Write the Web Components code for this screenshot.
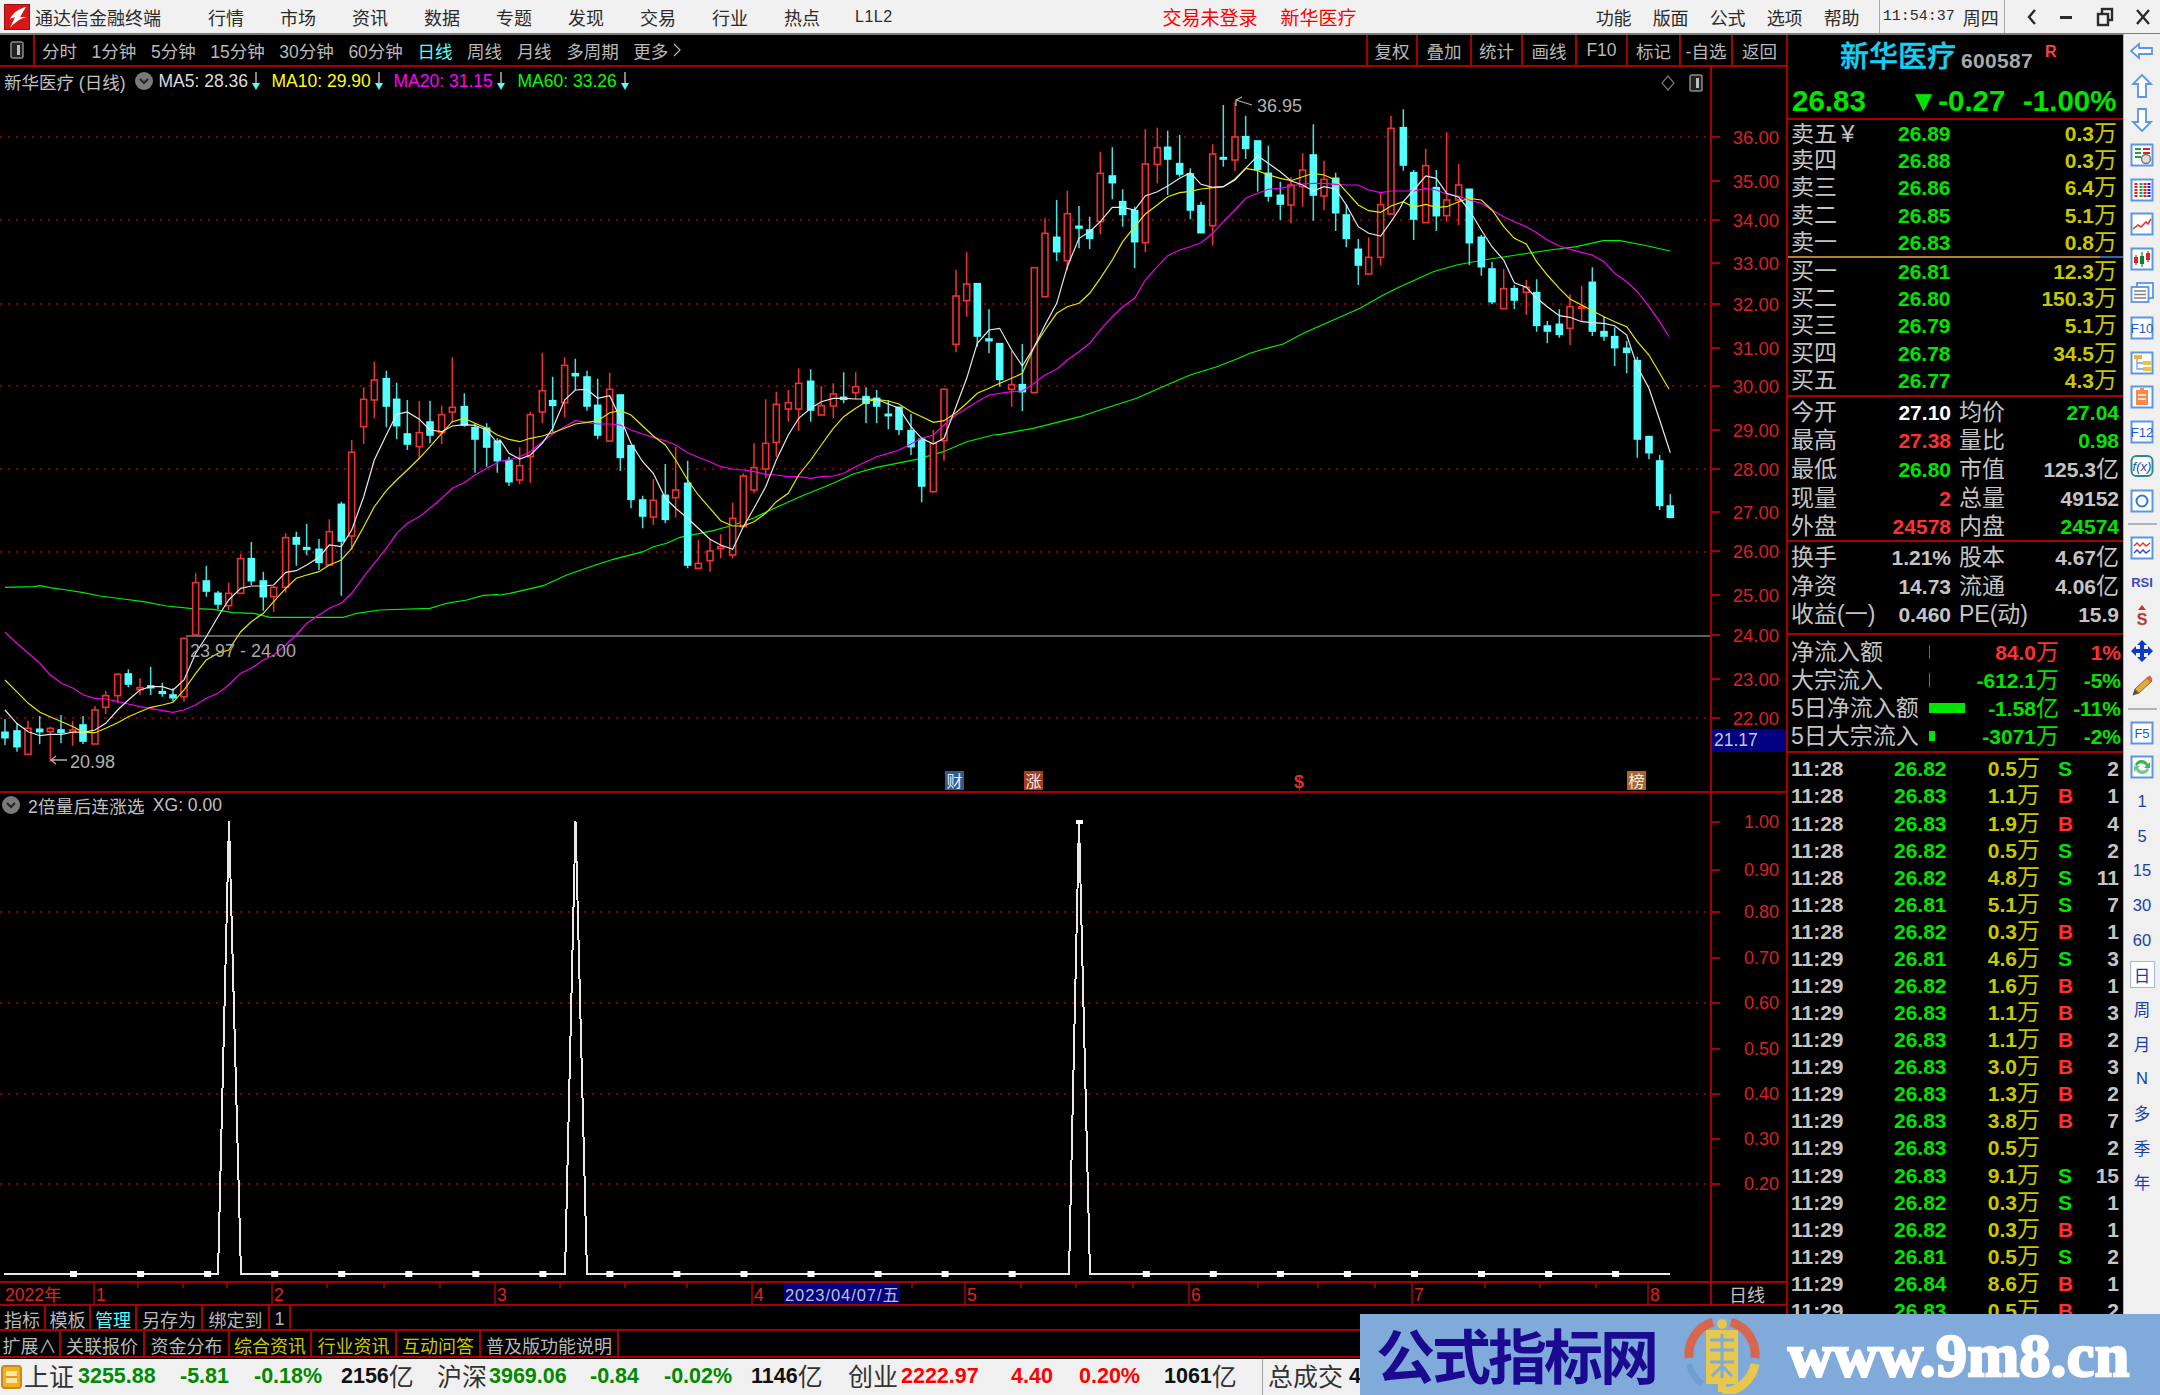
<!DOCTYPE html>
<html>
<head>
<meta charset="utf-8">
<style>
  html, body { margin: 0; padding: 0; background: #000; overflow: hidden; }
  body { font-family: "Liberation Sans", "Noto Sans CJK SC", sans-serif; }
</style>
</head>
<body>
<td-app>
  <td-titlebar></td-titlebar>
  <td-main>
    <td-left>
      <td-toolbar></td-toolbar>
      <td-kline></td-kline>
      <td-indicator></td-indicator>
      <td-dateaxis></td-dateaxis>
      <td-tabs h="25">
        <td-tab w="46">指标</td-tab><td-tab w="45">模板</td-tab><td-tab w="46" c="#54ffff">管理</td-tab><td-tab w="66">另存为</td-tab><td-tab w="67">绑定到</td-tab><td-tab w="21">1</td-tab>
      </td-tabs>
      <td-tabs h="27">
        <td-tab w="61">扩展∧</td-tab><td-tab w="84">关联报价</td-tab><td-tab w="85">资金分布</td-tab><td-tab w="82" c="#c8c800">综合资讯</td-tab><td-tab w="85" c="#c8c800">行业资讯</td-tab><td-tab w="84" c="#c8c800">互动问答</td-tab><td-tab w="138">普及版功能说明</td-tab>
      </td-tabs>
    </td-left>
    <td-quote></td-quote>
    <td-sidebar></td-sidebar>
  </td-main>
  <td-status></td-status>
  <td-watermark></td-watermark>
</td-app>

<script>
const FONT = '"Liberation Sans", "Noto Sans CJK SC", sans-serif';
const RED_LINE = '#a80000';

function boxIcon ( size ) {
  return `<svg width="${ size }" height="${ size + 4 }" viewBox="0 0 14 18"><rect x="1" y="1" width="12" height="16" rx="2" fill="#222" stroke="#8a8a8a" stroke-width="1.5"/><rect x="7" y="4" width="3" height="10" fill="#bdbdbd"/></svg>`;
}

class TdApp extends HTMLElement {
  connectedCallback () {
    this.attachShadow( { mode: 'open' } );
    this.shadowRoot.innerHTML = `
    <style>
      :host { display: flex; flex-direction: column; position: relative; width: 2160px; height: 1395px; overflow: hidden; background: #000; }
    </style>
    <slot></slot>`;
  }
}

class TdTitlebar extends HTMLElement {
  connectedCallback () {
    this.attachShadow( { mode: 'open' } );
    const menus = [ '行情', '市场', '资讯', '数据', '专题', '发现', '交易', '行业', '热点' ];
    this.shadowRoot.innerHTML = `
    <style>
      :host { display: flex; align-items: center; box-sizing: border-box; height: 35px; flex: none; background: #f1f1f1; border-bottom: 2px solid #7c7c7c; color: #2b2b2b; font: 18px ${ FONT }; white-space: nowrap; }
      .logo { margin: 0 5px 0 4px; flex: none; display: block; }
      .m { margin-left: 36px; }
      .m.first { margin-left: 47px; }
      .l { margin-left: 35px; font-size: 16px; letter-spacing: .5px; }
      .red { color: #f00; font-size: 19px; }
      .sep { width: 1px; height: 33px; background: #a8a8a8; flex: none; }
      .r { margin-left: 21px; }
      .clock { font: 15px "Liberation Mono", monospace; margin-left: 3px; }
      svg.w { flex: none; display: block; }
    </style>
    <svg class="logo" width="26" height="26" viewBox="0 0 26 26"><rect width="26" height="26" fill="#d81818"/><rect x=".5" y=".5" width="25" height="25" fill="none" stroke="#9c1010"/><path d="M22 3 C14 5 9 9 6 15 L11 13 L6 24 C11 18 17 14 23 13 L16 13 Z" fill="#fff"/></svg>
    <span>通达信金融终端</span>
    ${ menus.map( ( m, i ) => `<span class="m ${ i ? '' : 'first' }">${ m }</span>` ).join( '' ) }
    <span class="l">L1L2</span>
    <span class="red" style="margin-left:270px">交易未登录</span>
    <span class="red" style="margin-left:23px">新华医疗</span>
    <span style="margin-left:239px">功能</span>
    <span class="r">版面</span><span class="r">公式</span><span class="r">选项</span><span class="r">帮助</span>
    <span class="sep" style="margin-left:19px"></span>
    <span class="clock">11:54:37</span>
    <span style="margin-left:8px">周四</span>
    <span class="sep" style="margin-left:5px"></span>
    <svg class="w" style="margin-left:20px" width="14" height="18" viewBox="0 0 14 18"><path d="M10 2 L4 9 L10 16" fill="none" stroke="#2b2b2b" stroke-width="2.4"/></svg>
    <svg class="w" style="margin-left:20px" width="14" height="18" viewBox="0 0 14 18"><rect x="1" y="8" width="12" height="3" fill="#2b2b2b"/></svg>
    <svg class="w" style="margin-left:23px" width="18" height="20" viewBox="0 0 18 20"><rect x="6" y="2" width="10" height="11" fill="none" stroke="#2b2b2b" stroke-width="2.4"/><rect x="2" y="7" width="10" height="11" fill="#f1f1f1" stroke="#2b2b2b" stroke-width="2.4"/></svg>
    <svg class="w" style="margin-left:21px" width="16" height="18" viewBox="0 0 16 18"><path d="M2 2 L14 16 M14 2 L2 16" stroke="#2b2b2b" stroke-width="2.4"/></svg>`;
  }
}

class TdMain extends HTMLElement {
  connectedCallback () {
    this.attachShadow( { mode: 'open' } );
    this.shadowRoot.innerHTML = `
    <style>
      :host { display: flex; height: 1324px; flex: none; }
    </style>
    <slot></slot>`;
  }
}

class TdLeft extends HTMLElement {
  connectedCallback () {
    this.attachShadow( { mode: 'open' } );
    this.shadowRoot.innerHTML = `
    <style>
      :host { display: flex; flex-direction: column; box-sizing: border-box; width: 1788px; flex: none; border-right: 2px solid ${ RED_LINE }; background: #000; }
    </style>
    <slot></slot>`;
  }
}

class TdToolbar extends HTMLElement {
  connectedCallback () {
    this.attachShadow( { mode: 'open' } );
    const periods = [ '分时', '1分钟', '5分钟', '15分钟', '30分钟', '60分钟', '日线', '周线', '月线', '多周期' ];
    const tools = [ [ '复权', 50 ], [ '叠加', 54 ], [ '统计', 51 ], [ '画线', 54 ], [ 'F10', 51 ], [ '标记', 53 ], [ '-自选', 52 ], [ '返回', 55 ] ];
    this.shadowRoot.innerHTML = `
    <style>
      :host { display: flex; align-items: stretch; box-sizing: border-box; height: 32px; flex: none; border-bottom: 2px solid ${ RED_LINE }; color: #b8b8b8; font: 17.5px ${ FONT }; white-space: nowrap; }
      .box { width: 35px; box-sizing: border-box; border-right: 2px solid ${ RED_LINE }; display: flex; align-items: center; justify-content: center; flex: none; }
      .p { display: flex; align-items: center; gap: 14.6px; margin-left: 7px; }
      .p span { display: flex; align-items: center; gap: 5px; }
      .on { color: #54ffff; }
      .t { display: flex; margin-left: auto; }
      .t span { display: flex; align-items: center; justify-content: center; box-sizing: border-box; border-left: 2px solid ${ RED_LINE }; }
    </style>
    <div class="box">${ boxIcon( 14 ) }</div>
    <div class="p">${ periods.map( p => `<span class="${ p === '日线' ? 'on' : '' }">${ p }</span>` ).join( '' ) }<span>更多<svg width="8" height="16" viewBox="0 0 8 16"><path d="M1 2L7 8L1 14" fill="none" stroke="#b8b8b8" stroke-width="1.2"/></svg></span></div>
    <div class="t">${ tools.map( ( [ t, w ] ) => `<span style="width:${ w }px">${ t }</span>` ).join( '' ) }</div>`;
  }
}

// chart points were read from the screenshot at 3x, origin is the crop corner
const seg = ( ox, oy, pts ) => pts.map( ( [ x, y ] ) => [ ox + x / 3, oy + y / 3 ] );
const chain = ( ...segs ) => {
  const out = [];
  let last = -1;
  segs.flat().forEach( p => {
    if ( p[ 0 ] > last ) {
      out.push( p );
      last = p[ 0 ];
    }
  } );
  return out;
};

const MA5 = chain(
  seg( 0, 300, [ [15,1230],[50,1270],[85,1295],[120,1307],[150,1303],[185,1303],[220,1296],[250,1297],[285,1290],[317,1270],[353,1230],[385,1200],[420,1170],[452,1160],[487,1160],[519,1170],[552,1140],[587,1060],[619,1010],[654,950],[686,900],[722,865],[754,858],[790,858],[821,855],[857,817],[889,812],[920,795],[957,772],[988,735],[1024,740],[1055,690],[1091,590],[1123,480],[1159,405],[1190,343],[1222,336],[1258,358],[1290,390],[1325,395],[1357,378],[1393,374],[1425,376],[1460,390],[1492,430] ] ),
  seg( 500, 300, [ [0,420],[27,460],[59,477],[91,465],[127,430],[158,385],[194,300],[226,270],[261,268],[293,295],[329,287],[361,355],[393,430],[428,485],[460,520],[496,595],[527,625],[563,655],[595,685],[630,718],[662,735],[698,748],[730,680],[762,625],[797,560],[829,480],[865,405],[896,355],[932,325],[964,305],[1000,295],[1031,295],[1067,297],[1098,297],[1130,298],[1165,312],[1197,325],[1233,380],[1265,415],[1300,432],[1332,415],[1368,320],[1400,235],[1432,130],[1467,90],[1499,85] ] ),
  seg( 950, 90, [ [185,780],[217,828],[253,770],[285,705],[320,640],[352,530],[387,445],[419,425],[451,395],[487,352],[518,352],[554,360],[586,318],[622,305],[653,288],[689,265],[721,248],[753,283],[788,292],[820,290],[855,270],[887,235],[923,197],[955,220],[991,245],[1023,272],[1058,285],[1090,303],[1122,290],[1157,297],[1189,345],[1225,410],[1256,430],[1292,438],[1323,395],[1350,355] ] ),
  seg( 1350, 90, [ [160,335],[191,300],[227,258],[259,265],[290,310],[326,322],[358,360],[394,420],[426,470],[461,510],[493,578],[529,592],[560,625],[592,650],[628,677],[660,682],[695,695],[727,698],[762,700],[794,707],[830,735],[862,830],[897,895],[929,990],[961,1088] ] )
);
const MA10 = chain(
  seg( 0, 300, [ [15,1140],[50,1175],[85,1210],[120,1237],[150,1250],[185,1265],[220,1280],[250,1297],[285,1298],[317,1285],[353,1268],[385,1250],[420,1235],[452,1222],[487,1215],[519,1207],[552,1170],[587,1120],[619,1080],[654,1060],[686,1050],[722,995],[754,965],[790,940],[821,905],[857,865],[889,835],[920,825],[957,815],[988,795],[1024,780],[1055,745],[1091,680],[1123,620],[1159,572],[1190,540],[1222,510],[1258,475],[1290,440],[1325,400],[1357,365],[1393,355],[1425,370],[1460,385],[1492,405] ] ),
  seg( 500, 300, [ [0,408],[27,418],[59,425],[91,415],[127,408],[158,398],[194,385],[226,372],[261,367],[293,362],[329,338],[361,332],[393,345],[428,378],[460,408],[496,435],[527,480],[563,540],[595,585],[630,625],[662,662],[698,678],[730,678],[762,665],[797,640],[829,605],[865,580],[896,525],[932,480],[964,435],[1000,385],[1031,350],[1067,325],[1098,305],[1130,298],[1165,303],[1197,312],[1233,335],[1265,350],[1300,367],[1332,362],[1368,338],[1400,310],[1432,280],[1467,265],[1499,250] ] ),
  seg( 950, 90, [ [185,865],[217,850],[253,770],[285,720],[320,670],[352,650],[387,640],[419,610],[451,565],[487,510],[518,455],[554,410],[586,372],[622,345],[653,320],[689,308],[721,304],[753,297],[788,293],[820,290],[855,267],[887,235],[923,242],[955,255],[991,265],[1023,272],[1058,260],[1090,250],[1122,255],[1157,270],[1189,305],[1225,345],[1256,362],[1292,367],[1323,348] ] ),
  seg( 1350, 90, [ [160,335],[191,352],[227,343],[259,352],[290,350],[326,335],[358,325],[394,330],[426,360],[461,410],[493,445],[529,462],[560,515],[592,555],[628,595],[660,627],[695,645],[727,662],[762,680],[794,695],[830,710],[862,755],[897,795],[929,850],[957,897] ] )
);
const MA20 = chain(
  seg( 0, 300, [ [15,997],[50,1030],[85,1060],[120,1090],[150,1125],[185,1150],[220,1165],[250,1185],[285,1195],[317,1197],[353,1205],[385,1212],[420,1220],[452,1225],[487,1232],[519,1237],[552,1230],[587,1215],[619,1195],[654,1180],[686,1155],[722,1120],[754,1105],[790,1080],[821,1065],[857,1035],[889,1005],[920,970],[957,945],[988,925],[1024,910],[1055,880],[1091,830],[1123,790],[1159,745],[1190,700],[1222,670],[1258,650],[1290,625],[1325,595],[1357,565],[1393,548],[1425,525],[1460,505],[1492,488] ] ),
  seg( 500, 300, [ [0,483],[27,480],[59,470],[91,455],[127,425],[158,402],[194,380],[226,362],[261,367],[293,372],[329,372],[361,375],[393,390],[428,402],[460,412],[496,422],[527,435],[563,458],[595,472],[630,485],[662,500],[698,507],[730,510],[762,515],[797,523],[829,525],[865,530],[896,530],[932,535],[964,530],[1000,528],[1031,520],[1067,500],[1098,485],[1130,470],[1165,460],[1197,450],[1233,432],[1265,415],[1300,405],[1332,375],[1368,345],[1400,325],[1432,305],[1467,285],[1499,280] ] ),
  seg( 950, 90, [ [185,905],[217,903],[253,880],[285,855],[320,838],[352,810],[387,785],[419,760],[451,720],[487,680],[518,650],[554,625],[586,570],[622,530],[653,497],[689,480],[721,470],[753,458],[788,430],[820,395],[855,360],[887,325],[923,310],[955,298],[991,295],[1023,288],[1058,282],[1090,280],[1122,280],[1157,283],[1189,285],[1225,285],[1256,300],[1292,308],[1323,303],[1350,303] ] ),
  seg( 1350, 90, [ [160,303],[191,303],[227,295],[259,300],[290,312],[326,318],[358,330],[394,340],[426,360],[461,380],[493,395],[529,410],[560,428],[592,450],[628,468],[660,478],[695,487],[727,495],[762,515],[794,550],[830,575],[862,605],[897,650],[929,695],[957,740] ] )
);
const MA60 = chain(
  seg( 0, 300, [ [15,862],[100,860],[120,857],[150,863],[200,870],[250,878],[300,888],[370,897],[430,905],[500,918],[570,925],[640,928],[700,938],[760,940],[810,952],[1030,952],[1070,940],[1140,930],[1290,925],[1340,910],[1400,900],[1450,886],[1490,884] ] ),
  seg( 500, 300, [ [0,885],[30,880],[130,857],[200,825],[280,797],[340,778],[430,755],[460,740],[500,730],[540,712],[640,692],[700,675],[760,655],[800,635],[840,617],[900,590],[1000,550],[1060,522],[1130,502],[1250,478],[1330,455],[1400,425],[1480,405],[1500,403] ] ),
  seg( 950, 90, [ [250,1015],[390,980],[450,960],[560,925],[650,885],[720,855],[800,830],[860,807],[900,790],[950,775],[1000,762],[1060,730],[1150,690],[1230,655],[1300,615],[1350,590] ] ),
  seg( 1350, 90, [ [50,645],[130,595],[250,545],[320,525],[400,510],[500,495],[600,480],[680,470],[760,452],[810,452],[880,465],[960,483] ] )
);

// [ colour, x, wick top, body top, body bottom, wick bottom ], same 3x crop units
const C1 = [
  ['c',15,1258,1297,1313,1335],['c',51,1270,1293,1340,1355],['r',84,1262,1285,1363,1363],['c',119,1248,1288,1295,1333],['r',151,1280,1285,1295,1385],['c',183,1245,1290,1297,1330],['r',218,1262,1290,1297,1337],['c',249,1248,1275,1323,1332],['r',285,1218,1230,1332,1332],['r',317,1172,1187,1222,1242],['r',353,1120,1123,1187,1210],['c',385,1108,1122,1152,1162],['r',420,1135,1163,1169,1185],['c',452,1100,1158,1163,1185],['c',487,1148,1175,1180,1190],['c',519,1165,1185,1193,1205],['r',552,1015,1015,1190,1205],['r',587,820,848,1005,1005],['c',619,797,843,873,890],['c',654,873,880,912,928],['r',686,848,880,917,930],['r',722,762,776,880,882],['c',754,726,776,842,855],['c',790,815,843,890,932],['r',821,858,862,890,935],['r',857,700,713,862,878],['c',889,695,713,732,797],['c',920,672,743,748,765],['c',957,717,748,787,810],['r',988,658,695,795,795],['c',1024,605,613,723,887],['r',1055,420,457,708,750],['r',1091,262,298,380,432],['r',1123,185,240,300,355],['c',1159,212,236,318,382],['c',1190,248,298,377,418],['c',1222,300,402,432,450],['r',1258,303,398,440,475],['c',1290,302,366,405,430],['r',1325,317,344,398,432],['r',1357,172,322,336,368],['c',1393,280,320,375,380],['c',1425,370,383,417,518],['c',1460,370,385,441,500],['c',1492,415,424,482,518]
];
const C2 = [
  ['c',27,470,482,545,558],['r',59,442,497,540,553],['r',91,335,344,470,548],['r',127,158,272,336,370],['c',158,230,302,316,395],['r',194,172,196,308,352],['c',226,176,221,227,270],['c',261,212,231,318,332],['c',293,236,316,405,418],['r',329,218,268,423,423],['c',361,285,285,472,513],['c',393,437,437,598,625],['c',428,587,600,648,685],['r',460,537,601,651,675],['c',496,492,586,658,670],['r',527,440,570,593,652],['c',563,482,550,795,805],['r',595,720,790,805,805],['r',630,715,753,782,815],['r',662,703,740,746,775],['r',698,608,655,765,775],['r',730,520,528,680,680],['r',762,430,503,570,580],['r',797,298,430,507,535],['r',829,275,313,427,470],['r',865,270,308,327,365],['r',896,205,250,327,392],['c',932,208,244,330,365],['r',964,258,317,345,345],['r',1000,250,282,318,355],['c',1031,217,292,298,310],['r',1067,217,260,278,298],['c',1098,262,290,310,370],['c',1130,270,295,318,370],['c',1165,300,343,347,388],['c',1197,320,322,388,405],['c',1233,342,392,440,465],['c',1265,415,418,558,607],['r',1300,390,430,575,578],['r',1332,268,268,422,482]
];
const C3 = [
  ['r',18,540,618,763,787],['r',50,487,582,632,680],['c',82,581,581,738,770],['c',117,658,747,752,790],['c',149,760,761,868,890],['r',185,783,884,898,950],['c',217,762,884,905,963],['r',253,533,533,908,908],['r',285,385,430,620,620],['c',320,330,442,485,513],['r',352,302,371,512,540],['c',387,348,409,414,475],['c',419,380,420,445,477],['r',451,185,250,395,432],['c',487,172,258,278,328],['c',518,298,335,373,410],['c',554,350,362,455,535],['r',586,118,222,458,487],['r',622,113,173,223,280],['c',653,122,172,207,315],['c',689,135,221,252,260],['c',721,235,252,360,388],['c',753,335,347,428,430],['r',788,163,192,407,467],['c',820,45,203,207,230],['r',855,35,141,210,243],['c',887,77,140,175,207],['c',923,153,153,238,305],['c',955,167,250,318,335],['c',991,275,316,342,390],['r',1023,262,285,345,400],['r',1058,190,240,290,350],['c',1090,103,195,315,392],['r',1122,212,268,318,360],['c',1157,248,265,368,423],['c',1189,342,375,445,472],['c',1225,447,478,525,585],['r',1256,442,502,552,552],['r',1292,305,344,502,525],['r',1323,77,115,372,375]
];
const C4 = [
  ['c',160,58,113,225,242],['c',191,240,248,387,450],['r',227,176,227,398,398],['c',259,240,293,377,423],['r',290,127,330,377,395],['r',326,222,285,330,405],['c',358,298,298,458,525],['c',394,435,442,530,557],['c',426,515,537,635,643],['r',461,537,596,656,656],['c',493,585,596,630,657],['r',529,570,592,607,675],['c',560,568,608,706,725],['c',592,693,708,723,760],['c',628,658,703,733,743],['r',660,613,650,715,765],['r',695,587,650,655,695],['c',727,532,577,723,738],['c',762,680,725,738,752],['c',794,712,740,773,828],['c',830,753,775,787,850],['c',862,800,812,1047,1103],['c',897,1037,1040,1088,1107],['c',929,1095,1113,1246,1260],['c',961,1212,1248,1282,1282]
];

function candles ( list, ox, oy ) {
  return list.map( ( [ t, zx, wt, bt, bb, wb ] ) => {
    const x = ox + zx / 3;
    const y = z => oy + z / 3;
    const col = t === 'r' ? '#f23030' : '#54ffff';
    let s = `<path d="M${ x } ${ y( wt ) }V${ y( bt ) }M${ x } ${ y( bb ) }V${ y( wb ) }" stroke="${ t === 'r' ? col : '#48e0e0' }" stroke-width="1.5" fill="none"/>`;
    if ( t === 'r' ) {
      s += `<rect x="${ x - 3 }" y="${ y( bt ) }" width="6" height="${ Math.max( y( bb ) - y( bt ), 1 ) }" fill="#000" stroke="${ col }" stroke-width="1.6"/>`;
    } else {
      s += `<rect x="${ x - 3.8 }" y="${ y( bt ) - .8 }" width="7.6" height="${ y( bb ) - y( bt ) + 1.6 }" fill="${ col }"/>`;
    }
    return s;
  } ).join( '' );
}

function poly ( pts, col ) {
  return `<polyline points="${ pts.map( p => p[ 0 ].toFixed( 1 ) + ',' + p[ 1 ].toFixed( 1 ) ).join( ' ' ) }" fill="none" stroke="${ col }" stroke-width="1.2"/>`;
}

function maItem ( text, color, w ) {
  return `<span class="ma" style="color:${ color };width:${ w }px">${ text }<svg width="10" height="20" viewBox="0 0 10 20" style="margin-left:3px"><path d="M5 1V13" stroke="#ddd" stroke-width="1.2"/><path d="M1 12H9L5 19Z" fill="#54ffff"/></svg></span>`;
}

const CSS_AXIS = `
  svg { display: block; }
  text { font-family: ${ FONT }; }
`;

class TdKline extends HTMLElement {
  connectedCallback () {
    this.attachShadow( { mode: 'open' } );
    const labels = [ [ '36.00', 137 ], [ '35.00', 181 ], [ '34.00', 220 ], [ '33.00', 263 ], [ '32.00', 304 ], [ '31.00', 348 ], [ '30.00', 386 ], [ '29.00', 430 ], [ '28.00', 469 ], [ '27.00', 512 ], [ '26.00', 551 ], [ '25.00', 595 ], [ '24.00', 635 ], [ '23.00', 679 ], [ '22.00', 718 ] ];
    const dots = [ 137, 220, 304, 386, 469, 552, 718 ];
    const marks = [ [ 945, '财', '#2f5a92' ], [ 1024, '涨', '#a83a22' ], [ 1627, '榜', '#a8682a' ] ];
    this.shadowRoot.innerHTML = `
    <style>
      :host { display: block; position: relative; height: 726px; flex: none; background: #000; color: #c0c0c0; font: 17.5px ${ FONT }; }
      ${ CSS_AXIS }
      .legend { position: absolute; left: 4px; top: 3px; display: flex; align-items: center; height: 22px; white-space: nowrap; }
      .dot { margin: 0 6px 0 9px; display: block; }
      .ma { display: flex; align-items: center; }
    </style>
    <svg width="1786" height="726" viewBox="0 67 1786 726">
      ${ dots.map( y => `<line x1="0" x2="1711" y1="${ y }" y2="${ y }" stroke="#b40000" stroke-width="1.5" stroke-dasharray="2 6"/>` ).join( '' ) }
      <line x1="186" x2="1711" y1="636" y2="636" stroke="#808080" stroke-width="1.5"/>
      ${ poly( MA60, '#00f000' ) }
      ${ candles( C1, 0, 300 ) }${ candles( C2, 500, 300 ) }${ candles( C3, 950, 90 ) }${ candles( C4, 1350, 90 ) }
      ${ poly( MA20, '#f000f0' ) }${ poly( MA10, '#e8e800' ) }${ poly( MA5, '#e8e8e8' ) }
      <text x="190" y="657" fill="#a8a8a8" font-size="18">23.97 - 24.00</text>
      <text x="70" y="768" fill="#b0b0b0" font-size="18">20.98</text>
      <path d="M67 760H51M56 756L51 760L56 764" fill="none" stroke="#b0b0b0" stroke-width="1.3"/>
      <text x="1257" y="112" fill="#b0b0b0" font-size="18">36.95</text>
      <path d="M1252 105L1236 100M1236 106L1236 100L1242 97" fill="none" stroke="#b0b0b0" stroke-width="1.3"/>
      <line x1="1711" x2="1711" y1="67" y2="792" stroke="${ RED_LINE }" stroke-width="2"/>
      ${ labels.map( ( [ t, y ] ) => `<line x1="1711" x2="1720" y1="${ y }" y2="${ y }" stroke="${ RED_LINE }" stroke-width="2"/><text x="1779" y="${ y + 7 }" text-anchor="end" fill="#d92020" font-size="18.5">${ t }</text>` ).join( '' ) }
      <rect x="1712" y="729" width="74" height="23" fill="#000080"/>
      <text x="1714" y="746" fill="#c8c8c8" font-size="17.5">21.17</text>
      ${ marks.map( ( [ x, t, c ] ) => `<rect x="${ x }" y="771" width="19" height="19" fill="${ c }"/><text x="${ x + 1.5 }" y="786.5" fill="#eee" font-size="16">${ t }</text>` ).join( '' ) }
      <text x="1294" y="788" fill="#e03020" font-size="18" font-weight="bold">$</text>
      <polygon points="1668,76 1674,83 1668,90 1662,83" fill="none" stroke="#707070" stroke-width="1.3"/>
      <g transform="translate(1689 74)"><rect x="1" y="1" width="12" height="16" rx="2" fill="#222" stroke="#8a8a8a" stroke-width="1.5"/><rect x="7" y="4" width="3" height="10" fill="#bdbdbd"/></g>
      <line x1="0" x2="1786" y1="792" y2="792" stroke="${ RED_LINE }" stroke-width="2"/>
    </svg>
    <div class="legend">
      <span>新华医疗 (日线)</span>
      <svg class="dot" width="18" height="18" viewBox="0 0 18 18"><circle cx="9" cy="9" r="9" fill="#7a7a7a"/><path d="M5 7L9 11L13 7" fill="none" stroke="#222" stroke-width="2"/></svg>
      ${ maItem( 'MA5: 28.36', '#dcdcdc', 113 ) }${ maItem( 'MA10: 29.90', '#ffff00', 122 ) }${ maItem( 'MA20: 31.15', '#ff00ff', 124 ) }${ maItem( 'MA60: 33.26', '#00ff00', 120 ) }
    </div>`;
  }
}

class TdIndicator extends HTMLElement {
  connectedCallback () {
    this.attachShadow( { mode: 'open' } );
    const labels = [ [ '1.00', 822 ], [ '0.90', 870 ], [ '0.80', 912 ], [ '0.70', 958 ], [ '0.60', 1003 ], [ '0.50', 1049 ], [ '0.40', 1094 ], [ '0.30', 1139 ], [ '0.20', 1184 ] ];
    const dots = [ 912, 1003, 1094, 1184 ];
    const spikes = [ [ 218, 229, 241 ], [ 565, 575.5, 587 ], [ 1069, 1079, 1090 ] ];
    const base = 1274;
    let line = `M4 ${ base }`;
    spikes.forEach( ( [ a, b, c ] ) => {
      line += `H${ a }L${ b } 821L${ c } ${ base }`;
    } );
    line += 'H1670';
    const squares = [];
    for ( let x = 73; x < 1640; x += 67.05 ) {
      if ( x < 1069 || x > 1090 ) squares.push( x );
    }
    this.shadowRoot.innerHTML = `
    <style>
      :host { display: block; position: relative; height: 488px; flex: none; background: #000; color: #c0c0c0; font: 17.5px ${ FONT }; }
      ${ CSS_AXIS }
      .legend { position: absolute; left: 2px; top: 2px; display: flex; align-items: center; height: 20px; gap: 8px; white-space: nowrap; }
      .legend .n { letter-spacing: .3px; }
    </style>
    <svg width="1786" height="488" viewBox="0 793 1786 488">
      ${ dots.map( y => `<line x1="0" x2="1711" y1="${ y }" y2="${ y }" stroke="#b40000" stroke-width="1.5" stroke-dasharray="2 6"/>` ).join( '' ) }
      <path d="${ line }" fill="none" stroke="#e8e8e8" stroke-width="2" shape-rendering="crispEdges"/>
      ${ squares.map( x => `<rect x="${ ( x - 3 ).toFixed( 1 ) }" y="${ base - 3 }" width="7" height="6" fill="#fff"/>` ).join( '' ) }
      <rect x="1076" y="820" width="7" height="4" fill="#fff"/>
      <line x1="1711" x2="1711" y1="793" y2="1281" stroke="${ RED_LINE }" stroke-width="2"/>
      ${ labels.map( ( [ t, y ] ) => `<line x1="1711" x2="1720" y1="${ y }" y2="${ y }" stroke="${ RED_LINE }" stroke-width="2"/><text x="1779" y="${ y + 6 }" text-anchor="end" fill="#d92020" font-size="18">${ t }</text>` ).join( '' ) }
    </svg>
    <div class="legend">
      <svg width="18" height="18" viewBox="0 0 18 18"><circle cx="9" cy="9" r="9" fill="#7a7a7a"/><path d="M5 7L9 11L13 7" fill="none" stroke="#222" stroke-width="2"/></svg>
      <span class="n">2倍量后连涨选</span><span>XG: 0.00</span>
    </div>`;
  }
}

class TdDateaxis extends HTMLElement {
  connectedCallback () {
    this.attachShadow( { mode: 'open' } );
    const months = [ [ 94, '1' ], [ 272, '2' ], [ 495, '3' ], [ 752, '4' ], [ 965, '5' ], [ 1189, '6' ], [ 1412, '7' ], [ 1648, '8' ] ];
    const ticks = [ 138, 183, 227, 327, 384, 440, 560, 625, 687, 912, 1021, 1076, 1133, 1258, 1318, 1375, 1485, 1540, 1596 ];
    this.shadowRoot.innerHTML = `
    <style>
      :host { display: block; height: 25px; flex: none; }
      ${ CSS_AXIS }
    </style>
    <svg width="1786" height="25" viewBox="0 1281 1786 25">
      <text x="5" y="1301" fill="#e02020" font-size="17.5">2022年</text>
      ${ ticks.map( x => `<line x1="${ x }" x2="${ x }" y1="1282" y2="1288" stroke="${ RED_LINE }" stroke-width="1.5"/>` ).join( '' ) }
      ${ months.map( ( [ x, t ] ) => `<line x1="${ x }" x2="${ x }" y1="1282" y2="1305" stroke="${ RED_LINE }" stroke-width="1.5"/><text x="${ x + 2 }" y="1301" fill="#e02020" font-size="17.5">${ t }</text>` ).join( '' ) }
      <rect x="784" y="1283" width="116" height="22" fill="#000080"/>
      <text x="785" y="1301" fill="#c0c0c0" font-size="16.5" textLength="114">2023/04/07/五</text>
      <line x1="0" x2="1786" y1="1282" y2="1282" stroke="${ RED_LINE }" stroke-width="2"/>
      <line x1="0" x2="1786" y1="1305" y2="1305" stroke="${ RED_LINE }" stroke-width="2"/>
      <line x1="1711" x2="1711" y1="1281" y2="1305" stroke="${ RED_LINE }" stroke-width="2"/>
      <text x="1729" y="1302" fill="#c0c0c0" font-size="18">日线</text>
    </svg>`;
  }
}

class TdTabs extends HTMLElement {
  connectedCallback () {
    this.attachShadow( { mode: 'open' } );
    this.shadowRoot.innerHTML = `
    <style>
      :host { display: flex; box-sizing: border-box; height: ${ this.getAttribute( 'h' ) }px; flex: none; border-bottom: 2px solid ${ RED_LINE }; }
    </style>
    <slot></slot>`;
  }
}

class TdTab extends HTMLElement {
  connectedCallback () {
    this.attachShadow( { mode: 'open' } );
    this.shadowRoot.innerHTML = `
    <style>
      :host { display: flex; align-items: center; justify-content: center; box-sizing: border-box; width: ${ this.getAttribute( 'w' ) }px; padding-top: 3px; border-right: 2px solid ${ RED_LINE }; color: ${ this.getAttribute( 'c' ) || '#b8b8b8' }; font: 18px ${ FONT }; white-space: nowrap; }
    </style>
    <slot></slot>`;
  }
}

class TdQuote extends HTMLElement {
  connectedCallback () {
    this.attachShadow( { mode: 'open' } );
    const G = '#00e400', R = '#ff3030', S = '#c4c4c4', Y = '#c8c800';
    const unit = v => v.replace( /[万亿]/, m => `<i>${ m }</i>` );
    const book = ( name, rows ) => rows.map( ( [ l, p, v ] ) => `
      <div class="r book"><span class="lb">${ name }${ l }</span><b class="p" style="color:${ G }">${ p }</b><b class="v" style="color:${ Y }">${ unit( v ) }</b></div>` ).join( '' );
    const stat = rows => rows.map( ( [ a, av, ac, b, bv, bc ] ) => `
      <div class="r stat"><span class="lb a">${ a }</span><b class="av" style="color:${ ac }">${ unit( av ) }</b><span class="lb b">${ b }</span><b class="bv" style="color:${ bc }">${ unit( bv ) }</b></div>` ).join( '' );
    const flows = [
      [ '净流入额', 1, '84.0万', '1%', R ],
      [ '大宗流入', 1, '-612.1万', '-5%', G ],
      [ '5日净流入额', 36, '-1.58亿', '-11%', G ],
      [ '5日大宗流入', 6, '-3071万', '-2%', G ]
    ];
    const ticks = [
      '11:28 26.82 0.5 S 2', '11:28 26.83 1.1 B 1', '11:28 26.83 1.9 B 4', '11:28 26.82 0.5 S 2', '11:28 26.82 4.8 S 11', '11:28 26.81 5.1 S 7', '11:28 26.82 0.3 B 1',
      '11:29 26.81 4.6 S 3', '11:29 26.82 1.6 B 1', '11:29 26.83 1.1 B 3', '11:29 26.83 1.1 B 2', '11:29 26.83 3.0 B 3', '11:29 26.83 1.3 B 2', '11:29 26.83 3.8 B 7',
      '11:29 26.83 0.5 - 2', '11:29 26.83 9.1 S 15', '11:29 26.82 0.3 S 1', '11:29 26.82 0.3 B 1', '11:29 26.81 0.5 S 2', '11:29 26.84 8.6 B 1', '11:29 26.83 0.5 B 2'
    ];
    this.shadowRoot.innerHTML = `
    <style>
      :host { display: flex; flex-direction: column; width: 335px; flex: none; overflow: hidden; background: #000; color: ${ S }; font: 23px/1 ${ FONT }; white-space: nowrap; }
      i { font: 23px/1 ${ FONT }; }
      b { font-size: 21px; font-weight: 700; line-height: 1; }
      .line { height: 2px; background: ${ RED_LINE }; flex: none; }
      .head { height: 49px; display: flex; align-items: center; flex: none; padding: 0 0 4px 52px; box-sizing: border-box; }
      .name { color: #16d0f4; font-size: 29px; font-weight: 500; -webkit-text-stroke: .4px #16d0f4; }
      .code { color: #a8a8a8; font-size: 21px; font-weight: 700; margin-left: 5px; padding-top: 5px; letter-spacing: .3px; }
      .rr { color: #ff4040; font-size: 16px; font-weight: 700; margin-left: 12px; margin-bottom: 12px; }
      .price { height: 34px; display: flex; align-items: center; flex: none; color: ${ G }; font-size: 29.5px; font-weight: 700; padding-left: 4px; }
      .price b { font-size: 29.5px; }
      .r { display: flex; align-items: center; flex: none; padding-left: 3px; }
      .book { height: 27.2px; }
      .lb { flex: none; }
      .yen { font-size: 24px; margin-left: 4px; }
      .book .lb { width: 107px; }
      .book .p { width: 60px; }
      .book .v { width: 159px; text-align: right; }
      .stat { height: 28.7px; box-sizing: border-box; padding-top: 2px; }
      .s2 .stat { height: 28.5px; }
      .a { width: 100px; }
      .av { width: 60px; text-align: right; }
      .b { width: 84px; margin-left: 8px; }
      .bv { width: 76px; text-align: right; }
      .flow { height: 28px; box-sizing: border-box; padding-top: 5px; }
      .flow .lb { width: 138px; }
      .bar { width: 40px; flex: none; }
      .bar span { display: block; }
      .flow .fv { width: 90px; text-align: right; }
      .flow .fp { width: 62px; text-align: right; }
      .tick { height: 27.08px; box-sizing: border-box; padding-top: 5px; }
      .tick .t { width: 103px; color: ${ S }; }
      .tick .tp { width: 60px; color: ${ G }; }
      .tick .tv { width: 86px; text-align: right; color: ${ Y }; }
      .tick .bs { width: 20px; margin-left: 18px; }
      .tick .tc { width: 41px; text-align: right; color: ${ S }; }
      .brown { height: 2px; flex: none; background: linear-gradient(90deg, #b08030 312px, #2a6aa8 312px); }
    </style>
    <div class="head"><span class="name">新华医疗</span><span class="code">600587</span><span class="rr">R</span></div>
    <div class="price"><b style="width:117px">26.83</b><b style="width:114px">▼-0.27</b><b>-1.00%</b></div>
    <div class="line"></div>
    ${ book( '卖', [ [ '五<span class="yen">¥</span>', '26.89', '0.3万' ], [ '四', '26.88', '0.3万' ], [ '三', '26.86', '6.4万' ], [ '二', '26.85', '5.1万' ], [ '一', '26.83', '0.8万' ] ] ) }
    <div class="brown"></div>
    ${ book( '买', [ [ '一', '26.81', '12.3万' ], [ '二', '26.80', '150.3万' ], [ '三', '26.79', '5.1万' ], [ '四', '26.78', '34.5万' ], [ '五', '26.77', '4.3万' ] ] ) }
    <div style="height:1px;flex:none"></div>
    <div class="line"></div>
    ${ stat( [
      [ '今开', '27.10', '#fff', '均价', '27.04', G ],
      [ '最高', '27.38', R, '量比', '0.98', G ],
      [ '最低', '26.80', G, '市值', '125.3亿', S ],
      [ '现量', '2', R, '总量', '49152', S ],
      [ '外盘', '24578', R, '内盘', '24574', G ]
    ] ) }
    <div class="line"></div>
    <div class="s2">${ stat( [
      [ '换手', '1.21%', S, '股本', '4.67亿', S ],
      [ '净资', '14.73', S, '流通', '4.06亿', S ],
      [ '收益(一)', '0.460', S, 'PE(动)', '15.9', S ]
    ] ) }</div>
    <div style="height:5px;flex:none"></div>
    <div class="line"></div>
    <div style="height:1px;flex:none"></div>
    ${ flows.map( ( [ l, w, v, p, c ] ) => `
      <div class="r flow"><span class="lb">${ l }</span><div class="bar"><span style="width:${ w }px;height:${ w > 1 ? 10 : 14 }px;background:${ w > 1 ? '#00e400' : ( c === R ? '#e03030' : '#00c000' ) }"></span></div><b class="fv" style="color:${ c }">${ unit( v ) }</b><b class="fp" style="color:${ c }">${ p }</b></div>` ).join( '' ) }
    <div style="height:3px;flex:none"></div>
    <div class="line"></div>
    ${ ticks.map( row => {
      const [ t, p, v, bs, n ] = row.split( ' ' );
      return `<div class="r tick"><b class="t">${ t }</b><b class="tp">${ p }</b><b class="tv">${ v }<i>万</i></b><b class="bs" style="color:${ bs === 'S' ? G : R }">${ bs === '-' ? '' : bs }</b><b class="tc">${ n }</b></div>`;
    } ).join( '' ) }`;
  }
}

const BLUE = '#5a96e6';
const frame = `<rect x="1.5" y="1.5" width="21" height="21" fill="#fff" stroke="${ BLUE }" stroke-width="2"/>`;
const arrow = d => `<path d="${ d }" fill="#fff" stroke="${ BLUE }" stroke-width="1.8"/>`;
const ftext = t => `${ frame }<text x="12" y="17" text-anchor="middle" font-size="13" fill="#1a5ad0" style="font-family:${ FONT.replace( /"/g, "'" ) }">${ t }</text>`;
const ICONS = [
  arrow( 'M1 12L9 5V9H22V15H9V19Z' ),
  arrow( 'M12 1L21 10H16V23H8V10H3Z' ),
  arrow( 'M12 23L21 14H16V1H8V14H3Z' ),
  `${ frame }<path d="M5 6H11M5 10H11M5 14H11" stroke="#20a040" stroke-width="2"/><path d="M13 6H20M13 10H20" stroke="#e02020" stroke-width="2"/><circle cx="16" cy="16" r="4.5" fill="#ddd" stroke="#777" stroke-width="1.5"/>`,
  `${ frame }<path d="M6 5V19" stroke="#e02020" stroke-width="3" stroke-dasharray="2 1"/><path d="M11 5V19" stroke="#20a040" stroke-width="3" stroke-dasharray="2 1"/><path d="M15 5V19" stroke="#e02020" stroke-width="3" stroke-dasharray="2 1"/><path d="M19 5V19" stroke="#2020e0" stroke-width="3" stroke-dasharray="2 1"/>`,
  `${ frame }<path d="M3 17L8 13L11 15L16 10L18 12L21 7" fill="none" stroke="#e83030" stroke-width="1.6"/>`,
  `${ frame }<path d="M6 8V18M18 4V15" stroke="#e02020" stroke-width="1.2"/><path d="M12 5V20" stroke="#108030" stroke-width="1.2"/><rect x="4" y="10" width="4" height="6" fill="#e02020"/><rect x="10" y="9" width="4" height="8" fill="#108030"/><rect x="16" y="6" width="4" height="7" fill="#e02020"/>`,
  `<rect x="7" y="2" width="16" height="15" fill="#fff" stroke="${ BLUE }" stroke-width="1.8"/><rect x="1.5" y="6" width="17" height="15" fill="#fff" stroke="${ BLUE }" stroke-width="1.8"/><path d="M4 10H16M4 13.5H16M4 17H16" stroke="#808080" stroke-width="1.6"/>`,
  ftext( 'F10' ),
  `${ frame }<rect x="4" y="4" width="8" height="4" fill="#f0b030"/><rect x="13" y="10" width="8" height="4" fill="#f0c040"/><rect x="13" y="16" width="8" height="4" fill="#f0c040"/><path d="M7 8V18H13M7 12H13" fill="none" stroke="#70a0e0" stroke-width="1.3"/>`,
  `${ frame }<rect x="6" y="5" width="12" height="15" fill="#f58a4a"/><rect x="10" y="3" width="4" height="3" fill="#f58a4a"/><path d="M8 10H16M8 14H16" stroke="#fff" stroke-width="1.6"/>`,
  ftext( 'F12' ),
  `<rect x="1.5" y="2" width="21" height="20" rx="5" fill="#fff" stroke="#2a8a8a" stroke-width="2"/><text x="12" y="17" text-anchor="middle" font-size="13" font-style="italic" fill="#1a4ab0">f(x)</text>`,
  `${ frame }<circle cx="12" cy="12" r="5.5" fill="none" stroke="#2a7ad8" stroke-width="2"/>`,
  'sep',
  `${ frame }<path d="M4 10L7 7L10 10L13 7L16 10L20 7" fill="none" stroke="#e03030" stroke-width="1.4"/><path d="M4 17L7 14L10 17L13 14L16 17L20 14" fill="none" stroke="#3040d0" stroke-width="1.4"/>`,
  `<text x="12" y="17" text-anchor="middle" font-size="13" font-weight="bold" fill="#3a4ab8">RSI</text>`,
  `<path d="M12 0L16 5H8Z" fill="#d03030"/><text x="12" y="20" text-anchor="middle" font-size="16" font-weight="bold" fill="#c82828" stroke="#999" stroke-width=".4">S</text>`,
  `<path d="M12 1L17 6H14V10H18V7L23 12L18 17V14H14V18H17L12 23L7 18H10V14H6V17L1 12L6 7V10H10V6H7Z" fill="#1038c0"/>`,
  `<path d="M3 21L5 15L18 3L22 7L9 19Z" fill="#e8a838" stroke="#8a6a30"/><path d="M16 4L20 1.5L22.5 5L20 8Z" fill="#e06050"/><path d="M3 21L5 15L9 19Z" fill="#555"/>`,
  'sep',
  ftext( 'F5' ),
  `${ frame }<path d="M5 10A7 7 0 0 1 18 9L20 7V13H14L16 11A5 5 0 0 0 7 11Z" fill="#40b060"/><path d="M19 14A7 7 0 0 1 6 15L4 17V11H10L8 13A5 5 0 0 0 17 13Z" fill="#70c890"/>`
];

class TdSidebar extends HTMLElement {
  connectedCallback () {
    this.attachShadow( { mode: 'open' } );
    const labels = [ '1', '5', '15', '30', '60', '日', '周', '月', 'N', '多', '季', '年' ];
    this.shadowRoot.innerHTML = `
    <style>
      :host { display: flex; flex-direction: column; align-items: center; box-sizing: border-box; flex: 1; background: #f0f0f0; border-left: 1px solid #b8b8b8; margin-top: -1px; color: #1a3ea8; font: 16.5px ${ FONT }; }
      .i { height: 34.6px; display: flex; align-items: center; justify-content: center; flex: none; }
      .s { height: 12px; display: flex; align-items: center; flex: none; width: 100%; justify-content: center; }
      .s span { display: block; width: 29px; height: 2px; background: #b4b4b4; }
      .on { width: 25px; height: 27px; background: #fff; border: 1px solid #9ab8e8; box-sizing: border-box; display: flex; align-items: center; justify-content: center; }
      svg { display: block; }
    </style>
    ${ ICONS.map( ic => ic === 'sep'
      ? '<div class="s"><span></span></div>'
      : `<div class="i"><svg width="24" height="24" viewBox="0 0 24 24">${ ic }</svg></div>` ).join( '' ) }
    ${ labels.map( t => `<div class="i">${ t === '日' ? `<span class="on">${ t }</span>` : t }</div>` ).join( '' ) }`;
  }
}

class TdStatus extends HTMLElement {
  connectedCallback () {
    this.attachShadow( { mode: 'open' } );
    const GR = '#008a00', RD = '#ff0000', BK = '#111';
    const cells = [
      [ '上证', '', 24, 1 ], [ '3255.88', GR, 78 ], [ '-5.81', GR, 180 ], [ '-0.18%', GR, 254 ], [ '2156亿', BK, 341 ],
      [ '沪深', '', 437, 1 ], [ '3969.06', GR, 489 ], [ '-0.84', GR, 590 ], [ '-0.02%', GR, 664 ], [ '1146亿', BK, 751 ],
      [ '创业', '', 848, 1 ], [ '2222.97', RD, 901 ], [ '4.40', RD, 1011 ], [ '0.20%', RD, 1079 ], [ '1061亿', BK, 1164 ],
      [ '总成交', '', 1268, 1 ], [ '4', BK, 1349 ]
    ];
    this.shadowRoot.innerHTML = `
    <style>
      :host { display: flex; align-items: center; height: 36px; flex: none; background: #f0f0f0; color: #333; font: 21.5px/1 ${ FONT }; white-space: nowrap; }
      .ic { width: 24px; flex: none; }
      .ic svg { display: block; margin-left: 1px; }
      .c { flex: none; font-weight: 700; display: flex; align-items: center; }
      .l { font-size: 25px; font-weight: 400; }
      i { font: 25px/1 ${ FONT }; color: #333; }
      .sep { position: relative; }
      .sep::before { content: ""; position: absolute; left: -6px; top: -6px; bottom: -6px; width: 1px; background: #a0a0a0; }
    </style>
    <div class="ic"><svg width="21" height="24" viewBox="0 0 21 24"><rect x="1" y="1" width="19" height="22" rx="3" fill="#f0b020" stroke="#c88a10" stroke-width="2"/><rect x="5" y="6" width="11" height="12" fill="#fbe7a0"/><rect x="5" y="11" width="11" height="2" fill="#d89a20"/></svg></div>
    ${ cells.map( ( [ t, c, x, label ], i ) => {
      const next = cells[ i + 1 ] ? cells[ i + 1 ][ 2 ] : x + 20;
      return `<span class="c ${ label ? 'l' : '' } ${ t === '总成交' ? 'sep' : '' }" style="width:${ next - x }px;${ c ? 'color:' + c : '' }">${ t.replace( '亿', '<i>亿</i>' ) }</span>`;
    } ).join( '' ) }`;
  }
}

class TdWatermark extends HTMLElement {
  connectedCallback () {
    this.attachShadow( { mode: 'open' } );
    this.shadowRoot.innerHTML = `
    <style>
      :host { position: absolute; right: 0; bottom: 0; width: 800px; height: 81px; display: flex; align-items: center; background: #80aada; white-space: nowrap; }
      .cn { margin-left: 16px; width: 288px; color: #1b0a90; font: 700 59px/1.1 "Noto Sans CJK SC", sans-serif; letter-spacing: -3px; }
      .en { margin-left: 24px; color: #fff; font: 700 62px/1 "Liberation Serif", serif; -webkit-text-stroke: 2.5px #fff; letter-spacing: .4px; }
      svg { display: block; flex: none; margin-left: 16px; }
    </style>
    <span class="cn">公式指标网</span>
    <svg width="84" height="78" viewBox="0 0 84 78">
      <path d="M9 42A34 34 0 0 1 33 6" fill="none" stroke="#d6674e" stroke-width="9"/>
      <path d="M51 6A34 34 0 0 1 75 42" fill="none" stroke="#d6674e" stroke-width="9"/>
      <path d="M75 48A34 34 0 0 1 42 76" fill="none" stroke="#e8c84c" stroke-width="9"/>
      <path d="M9 48A34 34 0 0 0 22 68" fill="none" stroke="#6f9ed0" stroke-width="6"/>
      <circle cx="42" cy="8" r="5" fill="#e8c84c"/>
      <rect x="26" y="14" width="32" height="54" fill="#e8c84c"/>
      <rect x="38" y="68" width="8" height="8" fill="#e8c84c"/>
      <path d="M30 24H54M30 34H54M30 46H54M42 18V62M32 60L42 50L52 60" fill="none" stroke="#80aada" stroke-width="3"/>
    </svg>
    <span class="en">www.9m8.cn</span>`;
  }
}

customElements.define( 'td-app', TdApp );
customElements.define( 'td-titlebar', TdTitlebar );
customElements.define( 'td-main', TdMain );
customElements.define( 'td-left', TdLeft );
customElements.define( 'td-toolbar', TdToolbar );
customElements.define( 'td-kline', TdKline );
customElements.define( 'td-indicator', TdIndicator );
customElements.define( 'td-dateaxis', TdDateaxis );
customElements.define( 'td-tabs', TdTabs );
customElements.define( 'td-tab', TdTab );
customElements.define( 'td-quote', TdQuote );
customElements.define( 'td-sidebar', TdSidebar );
customElements.define( 'td-status', TdStatus );
customElements.define( 'td-watermark', TdWatermark );
</script>
</body>
</html>
